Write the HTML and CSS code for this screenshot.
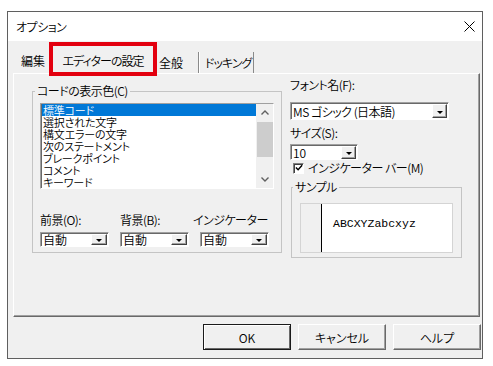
FILE: index.html
```html
<!DOCTYPE html>
<html>
<head>
  <meta charset="UTF-8">
  <title>オプション</title>
  <link rel="stylesheet" href="styles.css">
</head>
<body>

  <div class="dialog">
    <!-- Title bar -->
    <div class="title-bar">
      <span class="title">オプション</span>
      <svg class="close" viewBox="0 0 11 11">
        <path d="M0.5 0.5 L10.5 10.5 M10.5 0.5 L0.5 10.5" stroke="#000" stroke-width="1" fill="none"/>
      </svg>
    </div>

    <!-- Tabs -->
    <div class="tabs">
      <div class="tab tab-first">編集</div>
      <div class="tab tab-active">エディターの設定</div>
      <div class="tab tab-plain tab-general">全般</div>
      <div class="tab tab-plain tab-dock">ドッキング</div>
    </div>

    <div class="panel">
      <fieldset class="group group-colors">
        <legend>コードの表示色(C)</legend>
        <div class="listbox">
          <ul class="items">
            <li class="selected">標準コード</li>
            <li>選択された文字</li>
            <li>構文エラーの文字</li>
            <li>次のステートメント</li>
            <li>ブレークポイント</li>
            <li>コメント</li>
            <li>キーワード</li>
          </ul>
          <div class="scrollbar">
            <div class="arrow">
              <svg viewBox="0 0 8 5" class="chevron"><path d="M0.5 4.5 L4 1 L7.5 4.5" stroke="#606060" stroke-width="1.4" fill="none"/></svg>
            </div>
            <div class="thumb"></div>
            <div class="arrow arrow-down">
              <svg viewBox="0 0 8 5" class="chevron"><path d="M0.5 0.5 L4 4 L7.5 0.5" stroke="#606060" stroke-width="1.4" fill="none"/></svg>
            </div>
          </div>
        </div>

        <div class="pickers">
          <div class="picker">
            <span class="label">前景(O):</span>
            <div class="combo"><span>自動</span><span class="drop"></span></div>
          </div>
          <div class="picker">
            <span class="label">背景(B):</span>
            <div class="combo"><span>自動</span><span class="drop"></span></div>
          </div>
          <div class="picker">
            <span class="label label-wide">インジケーター</span>
            <div class="combo"><span>自動</span><span class="drop"></span></div>
          </div>
        </div>
      </fieldset>

      <div class="font-side">
        <span class="label">フォント名(F):</span>
        <div class="combo combo-font"><span>MS ゴシック (日本語)</span><span class="drop"></span></div>
        <span class="label label-size">サイズ(S):</span>
        <div class="combo combo-size"><span>10</span><span class="drop"></span></div>
        <div class="check-row">
          <span class="checkbox">
            <svg viewBox="0 0 9 9"><path d="M1 4 L3.5 6.5 L8 1.5" stroke="#000" stroke-width="1.6" fill="none"/></svg>
          </span>
          <span>インジケーター バー(M)</span>
        </div>
        <fieldset class="group group-sample">
          <legend>サンプル</legend>
          <div class="sample">
            <div class="sample-margin"></div>
            <div class="sample-text">ABCXYZabcxyz</div>
          </div>
        </fieldset>
      </div>
    </div>

    <!-- Dialog buttons -->
    <div class="buttons">
      <div class="btn btn-default">OK</div>
      <div class="btn">キャンセル</div>
      <div class="btn">ヘルプ</div>
    </div>
  </div>

</body>
</html>
```

FILE: styles.css
```css
html, body {
  margin: 0;
  height: 100%;
}

body {
  background: #fff;
  font-family: "Noto Sans CJK JP", "Noto Sans", sans-serif;
  font-size: 12px;
  font-weight: 350;
  letter-spacing: -0.5px;
  color: #000;
  font-feature-settings: "palt";
}

.dialog {
  margin: 11px 0 0 7px;
  width: 474px;
  height: 346px;
  border: 1px solid #5f5f5f;
  background: #f0f0f0;
  display: flex;
  flex-direction: column;
}

/* Title bar */
.title-bar {
  height: 29px;
  flex-shrink: 0;
  background: #fff;
  display: flex;
  align-items: center;
  justify-content: space-between;
  padding: 0 7px 0 8px;
}

.title {
  line-height: 14px;
}

.close {
  width: 11px;
  height: 11px;
}

/* Tabs */
.tabs {
  height: 32px;
  flex-shrink: 0;
  display: flex;
  align-items: flex-end;
  padding-left: 9px;
}

.tab {
  box-sizing: border-box;
  white-space: nowrap;
}

.tab-first {
  width: 32px;
  height: 24px;
  line-height: 24px;
  padding: 0 4px;
  letter-spacing: 0;
}

.tab-active {
  position: relative;
  z-index: 1;
  width: 108px;
  height: 34px;
  margin-bottom: -3px;
  border: 4px solid #e3000f;
  padding-top: 4px;
  line-height: 22px;
  text-align: center;
  letter-spacing: -1px;
  background: #f0f0f0;
}

.tab-plain {
  height: 21px;
  line-height: 21px;
  border-right: 1px solid #8a8a8a;
}

.tab-general {
  width: 42px;
  padding-left: 2px;
  letter-spacing: 0;
}

.tab-dock {
  width: 55px;
  padding-left: 5px;
  border-left: 1px solid #fff;
  letter-spacing: -1px;
}

/* Tab page */
.panel {
  margin: 0 2px 0 5px;
  height: 244px;
  flex-shrink: 0;
  box-sizing: border-box;
  border: 1px solid;
  border-color: #fff #696969 #696969 #fff;
  box-shadow: inset -1px -1px #a0a0a0;
  display: flex;
  align-items: flex-start;
  gap: 8px;
  padding: 4px 0 0 18px;
}

.group {
  margin: 0;
  border: 1px solid #c4c4c4;
  min-width: 0;
}

.group legend {
  padding: 0 2px;
  line-height: 14px;
}

.group-colors {
  width: 250px;
  box-sizing: border-box;
  margin-top: 6px;
  padding: 5px 7px 5px 7px;
}

.group-colors legend {
  margin-left: -5px;
}

/* List box */
.listbox {
  height: 86px;
  box-sizing: border-box;
  border: 1px solid;
  border-color: #a0a0a0 #fff #fff #a0a0a0;
  box-shadow: inset 1px 1px #696969;
  background: #fff;
  display: flex;
  padding-left: 1px;
  overflow: hidden;
}

.items {
  list-style: none;
  margin: 0;
  padding: 0;
  flex: 1;
}

.items li {
  height: 12px;
  line-height: 12px;
  font-size: 11px;
  letter-spacing: -0.2px;
  padding-left: 1px;
  white-space: nowrap;
}

.items li.selected {
  background: #0078d7;
  color: #fff;
}

.scrollbar {
  width: 17px;
  background: #f0f0f0;
  display: flex;
  flex-direction: column;
}

.arrow {
  height: 17px;
  display: flex;
  align-items: center;
  justify-content: center;
}

.arrow-down {
  margin-top: auto;
}

.chevron {
  width: 8px;
  height: 5px;
}

.thumb {
  height: 35px;
  margin: 1px 0 0 1px;
  background: #cdcdcd;
}

/* Colour pickers */
.pickers {
  display: flex;
  gap: 11px;
  margin-top: 24px;
}

.picker {
  width: 69px;
  display: flex;
  flex-direction: column;
}

.label {
  line-height: 14px;
  white-space: nowrap;
}

.picker .label {
  margin-bottom: 5px;
}

.label-wide {
  margin-left: -7px;
}

.combo {
  height: 15px;
  box-sizing: border-box;
  border: 1px solid;
  border-color: #a0a0a0 #fff #fff #a0a0a0;
  box-shadow: inset 1px 1px #696969;
  background: #fff;
  display: flex;
  align-items: center;
  justify-content: space-between;
  padding: 0 1px 0 2px;
  line-height: 13px;
  white-space: nowrap;
  letter-spacing: 0;
}

.drop {
  width: 16px;
  height: 11px;
  box-sizing: border-box;
  border: 1px solid;
  border-color: #fff #404040 #404040 #fff;
  box-shadow: inset -1px -1px #a0a0a0;
  background: #f0f0f0;
  display: flex;
  align-items: center;
  justify-content: center;
  padding-top: 2px;
}

.drop::after {
  content: "";
  border-left: 3px solid transparent;
  border-right: 3px solid transparent;
  border-top: 3px solid #000;
}

/* Font side */
.font-side {
  width: 172px;
  display: flex;
  flex-direction: column;
}

.combo-font {
  margin-top: 10px;
  width: 159px;
  height: 18px;
  padding-left: 2px;
  letter-spacing: -0.5px;
}

.combo-font .drop {
  width: 15px;
  height: 14px;
}

.label-size {
  margin-top: 6px;
}

.combo-size {
  margin-top: 4px;
  width: 68px;
  height: 16px;
}

.combo-size .drop {
  width: 15px;
  height: 13px;
}

.check-row {
  display: flex;
  align-items: center;
  gap: 4px;
  margin-top: 2px;
  height: 12px;
  line-height: 12px;
  padding-left: 3px;
  white-space: nowrap;
}

.checkbox {
  width: 11px;
  height: 11px;
  box-sizing: border-box;
  border: 1px solid;
  border-color: #808080 #fff #fff #808080;
  box-shadow: inset 1px 1px #404040;
  background: #fff;
  display: flex;
  align-items: center;
  justify-content: center;
}

.checkbox svg {
  width: 8px;
  height: 8px;
}

.group-sample {
  width: 171px;
  box-sizing: border-box;
  margin: 6px 0 0 1px;
  padding: 9px 8px 4px 8px;
}

.group-sample legend {
  margin-left: -7px;
}

.sample {
  height: 50px;
  box-sizing: border-box;
  border: 1px solid #d4d4d4;
  background: #fff;
  display: flex;
}

.sample-margin {
  width: 20px;
  background: #f0f0f0;
  border-right: 1px solid #000;
}

.sample-text {
  padding: 13px 0 0 11px;
  font-family: "Liberation Mono", monospace;
  font-size: 11.5px;
  font-weight: 400;
  letter-spacing: 0;
  line-height: 14px;
}

/* Buttons */
.buttons {
  display: flex;
  justify-content: flex-end;
  gap: 7px;
  margin: 7px 1px 0 0;
}

.btn {
  width: 88px;
  height: 26px;
  box-sizing: border-box;
  border: 1px solid;
  border-color: #fff #696969 #696969 #fff;
  box-shadow: inset -1px -1px #a0a0a0;
  background: #f0f0f0;
  display: flex;
  align-items: center;
  justify-content: center;
  letter-spacing: 0;
}

.btn-default {
  border-color: #1a1a1a;
  box-shadow: inset 1px 1px #fff, inset -1px -1px #696969;
}
```
